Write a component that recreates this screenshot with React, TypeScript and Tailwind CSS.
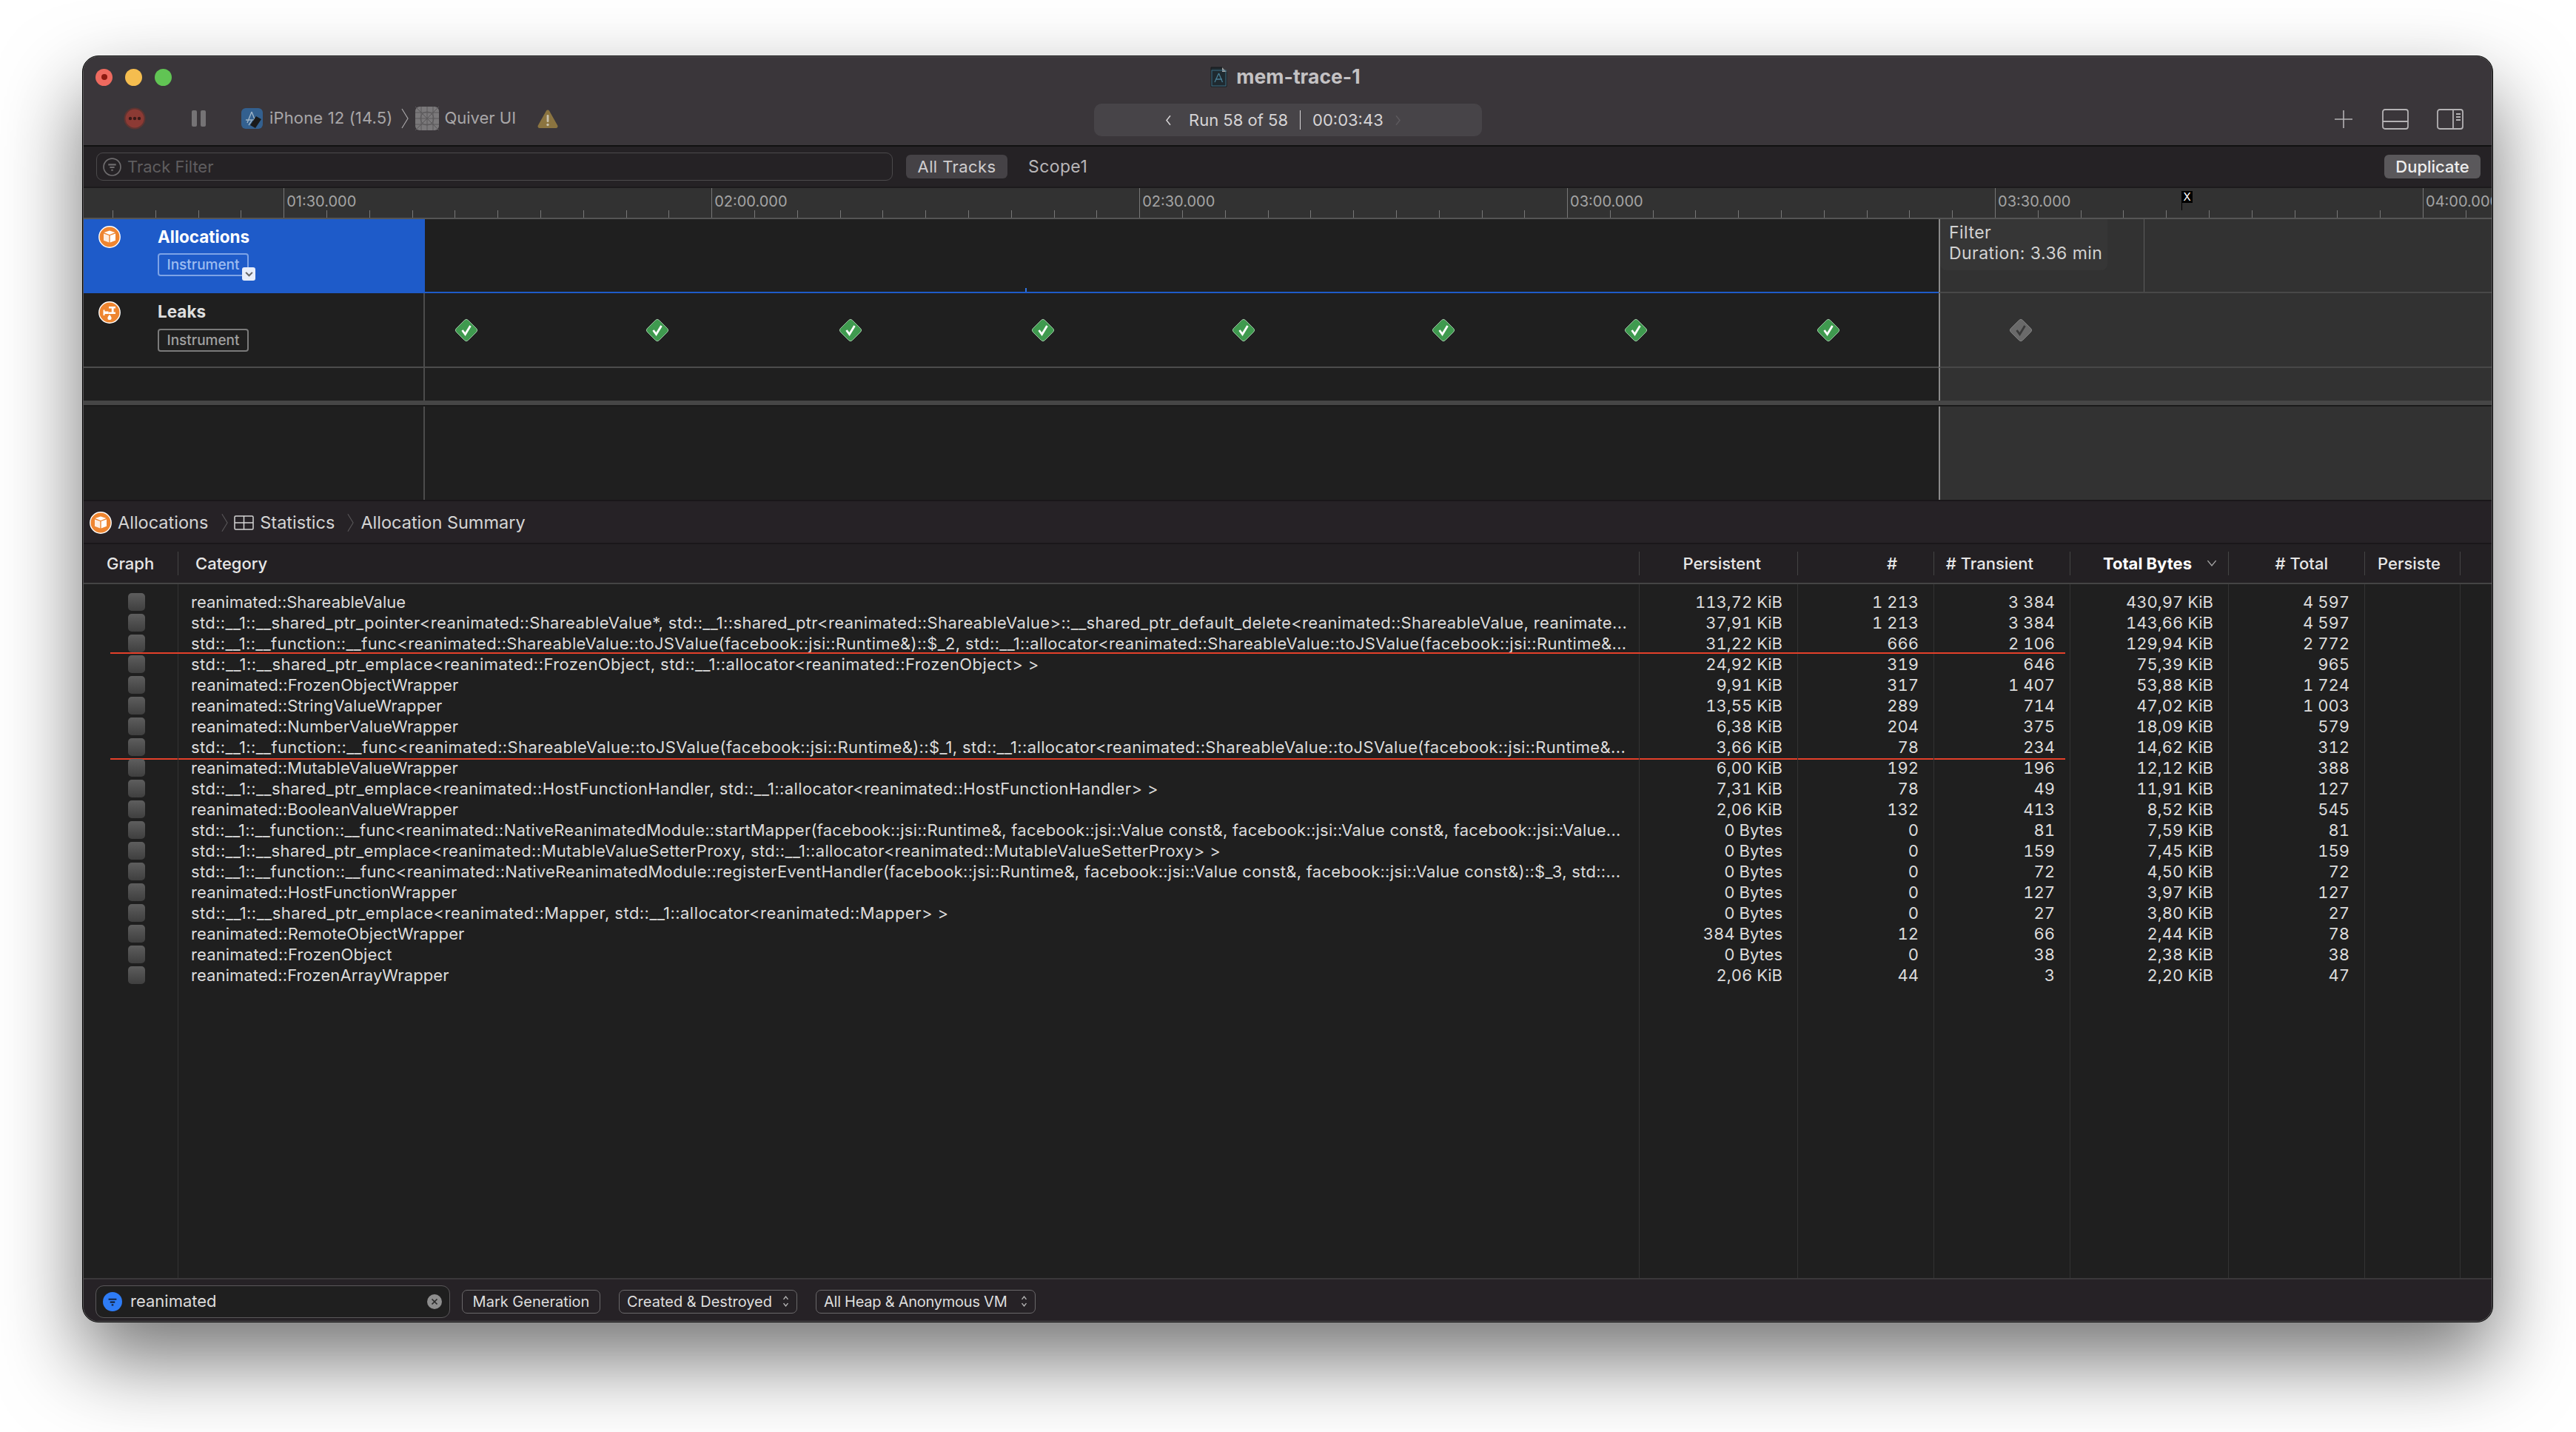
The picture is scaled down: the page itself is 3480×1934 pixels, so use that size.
import React from 'react';

const rows = [
  { name: 'reanimated::ShareableValue', track: 'tracking-[0px]', values: ['113,72 KiB', '1 213', '3 384', '430,97 KiB', '4 597'] },
  { name: 'std::__1::__shared_ptr_pointer<reanimated::ShareableValue*, std::__1::shared_ptr<reanimated::ShareableValue>::__shared_ptr_default_delete<reanimated::ShareableValue, reanimate...', track: 'tracking-[0.36px]', values: ['37,91 KiB', '1 213', '3 384', '143,66 KiB', '4 597'] },
  { name: 'std::__1::__function::__func<reanimated::ShareableValue::toJSValue(facebook::jsi::Runtime&)::$_2, std::__1::allocator<reanimated::ShareableValue::toJSValue(facebook::jsi::Runtime&...', track: 'tracking-[0.33px]', values: ['31,22 KiB', '666', '2 106', '129,94 KiB', '2 772'], line: 'top-[26px]' },
  { name: 'std::__1::__shared_ptr_emplace<reanimated::FrozenObject, std::__1::allocator<reanimated::FrozenObject> >', track: 'tracking-[0.44px]', values: ['24,92 KiB', '319', '646', '75,39 KiB', '965'] },
  { name: 'reanimated::FrozenObjectWrapper', track: 'tracking-[0.12px]', values: ['9,91 KiB', '317', '1 407', '53,88 KiB', '1 724'] },
  { name: 'reanimated::StringValueWrapper', track: 'tracking-[0.08px]', values: ['13,55 KiB', '289', '714', '47,02 KiB', '1 003'] },
  { name: 'reanimated::NumberValueWrapper', track: 'tracking-[0.08px]', values: ['6,38 KiB', '204', '375', '18,09 KiB', '579'] },
  { name: 'std::__1::__function::__func<reanimated::ShareableValue::toJSValue(facebook::jsi::Runtime&)::$_1, std::__1::allocator<reanimated::ShareableValue::toJSValue(facebook::jsi::Runtime&...', track: 'tracking-[0.36px]', values: ['3,66 KiB', '78', '234', '14,62 KiB', '312'], line: 'top-[29px]' },
  { name: 'reanimated::MutableValueWrapper', track: 'tracking-[0.08px]', values: ['6,00 KiB', '192', '196', '12,12 KiB', '388'] },
  { name: 'std::__1::__shared_ptr_emplace<reanimated::HostFunctionHandler, std::__1::allocator<reanimated::HostFunctionHandler> >', track: 'tracking-[0.4px]', values: ['7,31 KiB', '78', '49', '11,91 KiB', '127'] },
  { name: 'reanimated::BooleanValueWrapper', track: 'tracking-[0.08px]', values: ['2,06 KiB', '132', '413', '8,52 KiB', '545'] },
  { name: 'std::__1::__function::__func<reanimated::NativeReanimatedModule::startMapper(facebook::jsi::Runtime&, facebook::jsi::Value const&, facebook::jsi::Value const&, facebook::jsi::Value...', track: 'tracking-[0.24px]', values: ['0 Bytes', '0', '81', '7,59 KiB', '81'] },
  { name: 'std::__1::__shared_ptr_emplace<reanimated::MutableValueSetterProxy, std::__1::allocator<reanimated::MutableValueSetterProxy> >', track: 'tracking-[0.37px]', values: ['0 Bytes', '0', '159', '7,45 KiB', '159'] },
  { name: 'std::__1::__function::__func<reanimated::NativeReanimatedModule::registerEventHandler(facebook::jsi::Runtime&, facebook::jsi::Value const&, facebook::jsi::Value const&)::$_3, std::...', track: 'tracking-[0.28px]', values: ['0 Bytes', '0', '72', '4,50 KiB', '72'] },
  { name: 'reanimated::HostFunctionWrapper', track: 'tracking-[0.12px]', values: ['0 Bytes', '0', '127', '3,97 KiB', '127'] },
  { name: 'std::__1::__shared_ptr_emplace<reanimated::Mapper, std::__1::allocator<reanimated::Mapper> >', track: 'tracking-[0.46px]', values: ['0 Bytes', '0', '27', '3,80 KiB', '27'] },
  { name: 'reanimated::RemoteObjectWrapper', track: 'tracking-[0.12px]', values: ['384 Bytes', '12', '66', '2,44 KiB', '78'] },
  { name: 'reanimated::FrozenObject', track: 'tracking-[0.14px]', values: ['0 Bytes', '0', '38', '2,38 KiB', '38'] },
  { name: 'reanimated::FrozenArrayWrapper', track: 'tracking-[0.08px]', values: ['2,06 KiB', '44', '3', '2,20 KiB', '47'] },
];

const numberCols = ['w-[214px]', 'w-[184px]', 'w-[184px]', 'w-[214px]', 'w-[184px]'];

const leakMarks = [56, 314, 575, 835, 1106, 1376, 1636, 1896];

const rulerSegments = Array.from({ length: 56 }, (_, i) => i);
const rulerLabels: Record<number, string> = {
  4: '01:30.000',
  14: '02:00.000',
  24: '02:30.000',
  34: '03:00.000',
  44: '03:30.000',
  54: '04:00.000',
};

const AllocIcon = ({ className = '' }: { className?: string }) => (
  <svg viewBox="0 0 30 30" className={className}>
    <circle cx="15" cy="15" r="14.2" fill="#ee8530" stroke="#fff" strokeWidth="1.4" />
    <path d="M15 6.5l7.5 2.6-7.5 2.8-7.5-2.8z" fill="#fff" />
    <path d="M7 10.4l7.3 2.7v9.4L7 19.8z" fill="#fff" opacity="0.85" />
    <path d="M23 10.4l-7.3 2.7v9.4l7.3-2.7z" fill="#fff" />
  </svg>
);

const LeaksIcon = () => (
  <svg viewBox="0 0 30 30" className="h-[30px] w-[30px]">
    <circle cx="15" cy="15" r="14.2" fill="#ee8530" stroke="#fff" strokeWidth="1.4" />
    <path d="M14 7h9v2.6h-2.4v5H23V17h-9.6v-2.4h4.4v-5H14z" fill="#fff" />
    <path d="M6.5 11.5h2v2h5v3.6h-5v2h-2z" fill="#fff" />
    <path d="M15 18c1.6 2 2.6 3 2.6 4.4a2.6 2.6 0 0 1-5.2 0c0-1.4 1-2.4 2.6-4.4z" fill="#fff" />
  </svg>
);

const Diamond = ({ muted = false }: { muted?: boolean }) => (
  <svg viewBox="0 0 32 32" className="h-[32px] w-[32px]">
    <path
      d="M13.6 2.4a3.4 3.4 0 0 1 4.8 0l11.2 11.2a3.4 3.4 0 0 1 0 4.8L18.4 29.6a3.4 3.4 0 0 1-4.8 0L2.4 18.4a3.4 3.4 0 0 1 0-4.8z"
      fill={muted ? '#6a6a6a' : '#3f9a4f'}
      stroke={muted ? '#8a8a8a' : '#b9d8be'}
      strokeWidth="0.8"
    />
    <path d="M10.5 16l4 5.5L21.5 10" fill="none" stroke={muted ? '#3a3a3a' : '#fff'} strokeWidth="2.8" />
  </svg>
);

const Chevron = ({ className = '' }: { className?: string }) => (
  <svg viewBox="0 0 10 28" className={className} fill="none" stroke="currentColor" strokeWidth="1.2">
    <path d="M1 1l8 13-8 13" />
  </svg>
);

const UpDown = () => (
  <svg viewBox="0 0 10 20" className="h-[17px] w-[9px] shrink-0" fill="none" stroke="#b8b8b8" strokeWidth="1.6">
    <path d="M1.5 7L5 2.5 8.5 7M1.5 13L5 17.5 8.5 13" />
  </svg>
);

const FilterGlyph = ({ stroke }: { stroke: string }) => (
  <path d="M7 9h10M9 12.5h6M10.8 16h2.4" stroke={stroke} strokeWidth="2" fill="none" />
);

const TableRow = ({ name, values, line, track }: { name?: string; values?: string[]; line?: string; track?: string }) => (
  <div className="relative flex h-[28px] shrink-0 text-[22px] leading-[28px] text-[#dcdcdc]">
    <div className="flex w-[128px] shrink-0 items-center border-r border-[#333] pl-[60px]">
      {name && <div className="h-[24px] w-[23px] rounded-[5px] bg-gradient-to-b from-[#5e5e5e] to-[#3f3f3f]" />}
    </div>
    <div className={`${track} w-[1974px] shrink-0 overflow-hidden whitespace-nowrap border-r border-[#333] pl-[17px]`}>{name}</div>
    {numberCols.map((col, i) => (
      <div key={col + i} className={`${col} shrink-0 whitespace-nowrap border-r border-[#333] pr-[20px] text-right tabular-nums`}>
        {values && values[i]}
      </div>
    ))}
    <div className="w-[129px] shrink-0 border-r border-[#333]" />
    {line && <div className={`absolute left-[36px] ${line} h-[2px] w-[2641px] bg-[#e4402a]`} />}
  </div>
);

const HeaderCell = ({ className, children }: { className: string; children?: React.ReactNode }) => (
  <div className={`${className} flex h-[32px] shrink-0 items-center border-r border-[#444]`}>{children}</div>
);

const BarButton = ({ className, children }: { className: string; children: React.ReactNode }) => (
  <div className={`${className} flex h-[32px] items-center justify-between rounded-[7px] border border-[#6a686a] px-[10px] text-[20px] text-[#dedede]`}>
    {children}
  </div>
);

export default function App() {
  return (
    <div className="h-[1934px] w-[3480px] overflow-hidden bg-white pl-[111px] pt-[75px] [font-family:Inter,sans-serif]">
      <div className="h-[1711px] w-[3257px] rounded-[22px] border border-black bg-[#5a585a] p-px shadow-[0_50px_110px_rgba(0,0,0,0.55)]">
        <div className="flex h-full w-full flex-col overflow-hidden rounded-[20px] bg-[#1f1f1f]">
          {/* Title bar and toolbar */}
          <div className="flex h-[121px] shrink-0 flex-col border-b-2 border-[#111] bg-[#3a363a]">
            <div className="relative flex h-[52px] items-center justify-center pt-[2px]">
              <div className="absolute left-[16px] flex gap-[17px]">
                <div className="flex h-[23px] w-[23px] items-center justify-center rounded-full bg-[#ee6a5f]">
                  <div className="h-[8px] w-[8px] rounded-full bg-[#8c1a10]" />
                </div>
                <div className="h-[23px] w-[23px] rounded-full bg-[#f5bd4f]" />
                <div className="h-[23px] w-[23px] rounded-full bg-[#61c454]" />
              </div>
              <div className="flex items-center gap-[12px] pr-[6px]">
                <svg viewBox="0 0 23 28" className="h-[28px] w-[23px]">
                  <path d="M1 1h15l6 6v20H1z" fill="#1f2a30" stroke="#16181a" />
                  <path d="M16 1l6 6h-6z" fill="#a8a8a8" />
                  <path d="M11.5 9L6 21M11.5 9l5 12M7 17h9" stroke="#4a7f96" strokeWidth="1.3" fill="none" />
                  <rect x="2" y="5" width="19" height="21" fill="none" stroke="#3d6f85" strokeWidth="1" />
                </svg>
                <span className="text-[26.5px] font-bold text-[#c4c2c4]">mem-trace-1</span>
              </div>
            </div>
            <div className="flex flex-1 items-start pt-[11px]">
              <div className="flex w-[1365px] shrink-0 items-center pl-[54px] pt-[3px]">
                <svg viewBox="0 0 30 30" className="h-[30px] w-[30px] shrink-0">
                  <circle cx="15" cy="15" r="13.5" fill="#8c3a34" stroke="#5e3431" strokeWidth="2" />
                  <circle cx="9" cy="15" r="2.2" fill="#3a1a18" />
                  <circle cx="15" cy="15" r="2.2" fill="#3a1a18" />
                  <circle cx="21" cy="15" r="2.2" fill="#3a1a18" />
                </svg>
                <div className="ml-[62px] flex gap-[5px]">
                  <div className="h-[22px] w-[7px] rounded-[2px] bg-[#757375]" />
                  <div className="h-[22px] w-[7px] rounded-[2px] bg-[#757375]" />
                </div>
                <svg viewBox="0 0 29 28" className="ml-[48px] h-[28px] w-[29px] shrink-0">
                  <rect width="29" height="28" rx="6" fill="#33608f" />
                  <path d="M14 5L8 20M14 5l6 15M6 16h16M10 23l4-6" stroke="#9db4c8" strokeWidth="1.4" fill="none" />
                  <path d="M20 11l7 4-8 12-7-4z" fill="#1a1a1a" />
                </svg>
                <span className="ml-[9px] whitespace-nowrap text-[22px] tracking-[0.15px] text-[#a8a6a8]">iPhone 12 (14.5)</span>
                <Chevron className="ml-[12px] h-[28px] w-[10px] shrink-0 text-[#a8a6a8]" />
                <svg viewBox="0 0 32 32" className="ml-[9px] h-[32px] w-[32px] shrink-0">
                  <rect width="32" height="32" rx="6" fill="#7a787a" />
                  <path d="M8 0v32M16 0v32M24 0v32M0 8h32M0 16h32M0 24h32M0 0l32 32M32 0L0 32" stroke="#5a585a" strokeWidth="1" />
                  <circle cx="16" cy="16" r="9" fill="none" stroke="#5a585a" strokeWidth="1" />
                </svg>
                <span className="ml-[7px] whitespace-nowrap text-[22px] text-[#a8a6a8]">Quiver UI</span>
                <svg viewBox="0 0 28 26" className="ml-[29px] h-[26px] w-[28px] shrink-0">
                  <path d="M14 1.5a2.5 2.5 0 0 1 2.1 1.2l11 19.6a2.4 2.4 0 0 1-2.1 3.7H3a2.4 2.4 0 0 1-2.1-3.7l11-19.6A2.5 2.5 0 0 1 14 1.5z" fill="#8b7440" />
                  <rect x="12.6" y="8" width="2.8" height="10" rx="1.2" fill="#c9c2ae" />
                  <circle cx="14" cy="21.5" r="1.7" fill="#c9c2ae" />
                </svg>
              </div>
              <div className="flex h-[44px] w-[524px] shrink-0 items-center rounded-[10px] bg-[#474448] pl-[96px] text-[22px] text-[#d6d4d6]">
                <svg viewBox="0 0 10 18" className="h-[15px] w-[9px]" fill="none" stroke="#d6d4d6" strokeWidth="1.8">
                  <path d="M8 1.5L2 9l6 7.5" />
                </svg>
                <span className="ml-[23px] whitespace-nowrap">Run 58 of 58</span>
                <div className="mx-[16px] h-[26px] w-px bg-[#d6d4d6]" />
                <span className="whitespace-nowrap">00:03:43</span>
                <svg viewBox="0 0 10 18" className="ml-[15px] h-[15px] w-[9px]" fill="none" stroke="#5c595d" strokeWidth="1.8">
                  <path d="M2 1.5L8 9l-6 7.5" />
                </svg>
              </div>
              <div className="flex flex-1 items-center justify-end gap-[38px] pr-[38px] pt-[7px]">
                <svg viewBox="0 0 24 24" className="h-[24px] w-[24px]" stroke="#b4b2b4" strokeWidth="1.6">
                  <path d="M12 0v24M0 12h24" />
                </svg>
                <svg viewBox="0 0 36 28" className="ml-[2px] h-[28px] w-[36px]" fill="none" stroke="#b4b2b4" strokeWidth="1.8">
                  <rect x="1" y="1" width="34" height="26" rx="3" />
                  <path d="M1 17h34" />
                </svg>
                <svg viewBox="0 0 36 28" className="h-[28px] w-[36px]" fill="none" stroke="#b4b2b4" strokeWidth="1.8">
                  <rect x="1" y="1" width="34" height="26" rx="3" />
                  <path d="M22 1v26M26 7h6M26 11h6M26 15h6" />
                </svg>
              </div>
            </div>
          </div>

          {/* Track filter bar */}
          <div className="flex h-[56px] shrink-0 items-center border-b-2 border-[#1c1a1c] bg-[#252225] pl-[17px] pr-[15px]">
            <div className="flex h-[38px] w-[1076px] items-center rounded-[9px] border border-[#4c4a4c] pl-[8px]">
              <svg viewBox="0 0 24 24" className="h-[25px] w-[25px]">
                <circle cx="12" cy="12" r="11" fill="none" stroke="#6e6c6e" strokeWidth="1.6" />
                <FilterGlyph stroke="#6e6c6e" />
              </svg>
              <span className="ml-[8px] text-[22px] text-[#5f5d5f]">Track Filter</span>
            </div>
            <div className="ml-[18px] flex h-[32px] w-[137px] items-center justify-center rounded-[6px] bg-[#454246] text-[22px] tracking-[0.4px] text-[#cfcdcf]">All Tracks</div>
            <span className="ml-[28px] text-[23px] tracking-[0.4px] text-[#b8b6b8]">Scope1</span>
            <div className="ml-auto flex h-[32px] w-[130px] items-center justify-center rounded-[6px] bg-[#5a585b] text-[22px] font-medium text-[#eeeeee]">Duplicate</div>
          </div>

          {/* Time ruler */}
          <div className="relative flex h-[42px] shrink-0 overflow-hidden border-b-2 border-[#555] bg-[#323232] pl-[39px]">
            {rulerSegments.map((i) => (
              <div key={i} className="flex h-full w-[57.8px] shrink-0 items-end">
                {rulerLabels[i] ? (
                  <div className="h-full whitespace-nowrap border-l border-[#777] pl-[3px] pt-[7px] text-[20px] leading-[22px] text-[#a4a4a4]">{rulerLabels[i]}</div>
                ) : (
                  <div className="h-[10px] border-l border-[#777]" />
                )}
              </div>
            ))}
            <div className="absolute left-[2834px] top-[4px] flex flex-col">
              <div className="flex h-[16px] w-[15px] items-center justify-center bg-black text-[15px] leading-[16px] text-white">X</div>
              <div className="h-[10px] w-px bg-black" />
            </div>
          </div>

          {/* Tracks */}
          <div className="flex h-[245px] shrink-0 flex-col">
            <div className="flex h-[100px] shrink-0">
              <div className="relative w-[461px] shrink-0 bg-[#1e5bc9]">
                <AllocIcon className="absolute left-[20px] top-[9px] h-[30px] w-[30px]" />
                <div className="pl-[100px] pt-[10px] text-[22.5px] font-bold leading-[28px] text-white">Allocations</div>
                <div className="relative ml-[100px] mt-[8px] flex h-[31px] w-[123px] items-center justify-center rounded-[4px] border-2 border-[#7da3e6] pt-[1px] text-[19px] font-medium text-[#9dbcf0]">
                  Instrument
                  <div className="absolute left-[112px] top-[17px] flex h-[18px] w-[18px] items-center justify-center rounded-[3px] bg-[#e8eefa]">
                    <svg viewBox="0 0 12 8" className="h-[7px] w-[11px]" fill="none" stroke="#666" strokeWidth="2.4">
                      <path d="M1 1l5 5 5-5" />
                    </svg>
                  </div>
                </div>
              </div>
              <div className="relative w-[2045px] shrink-0 border-b-2 border-[#1e5bc9] bg-[#1f1f1f]">
                <div className="absolute bottom-0 left-[811px] h-[5px] w-[2px] bg-[#2f74e0]" />
              </div>
              <div className="relative flex flex-1 border-b-2 border-l-2 border-b-[#484848] border-l-[#8a8a8a] bg-[#323232]">
                <div className="w-[276px] border-r border-[#5c5c5c]" />
                <div className="absolute left-0 top-0 h-[69px] w-[226px] rounded-b-[8px] bg-[#363636] pl-[12px] pt-[4px] text-[23px] leading-[28px] tracking-[0.45px] text-[#d2d2d2]">
                  <div>Filter</div>
                  <div className="whitespace-nowrap">Duration: 3.36 min</div>
                </div>
              </div>
            </div>
            <div className="flex h-[101px] shrink-0">
              <div className="relative w-[461px] shrink-0 border-b-2 border-r-2 border-[#4c4c4c]">
                <div className="absolute left-[20px] top-[11px]">
                  <LeaksIcon />
                </div>
                <div className="pl-[100px] pt-[11px] text-[22.5px] font-bold leading-[28px] text-[#dedede]">Leaks</div>
                <div className="ml-[100px] mt-[9px] flex h-[31px] w-[123px] items-center justify-center rounded-[4px] border-2 border-[#7a7a7a] pt-[1px] text-[19px] font-medium text-[#a0a0a0]">Instrument</div>
              </div>
              <div className="relative w-[2045px] shrink-0 border-b-2 border-[#4c4c4c]">
                {leakMarks.map((x) => (
                  <div key={x} className="absolute top-[34px]" style={{ left: x - 16 }}>
                    <Diamond />
                  </div>
                ))}
              </div>
              <div className="relative flex-1 border-b-2 border-l-2 border-b-[#484848] border-l-[#8a8a8a] bg-[#323232]">
                <div className="absolute left-[93px] top-[34px]">
                  <Diamond muted />
                </div>
              </div>
            </div>
            <div className="flex flex-1">
              <div className="w-[461px] shrink-0 border-r-2 border-[#4c4c4c]" />
              <div className="w-[2045px] shrink-0" />
              <div className="flex-1 border-l-2 border-[#8a8a8a] bg-[#323232]" />
            </div>
          </div>

          {/* Divider */}
          <div className="h-[8px] shrink-0 border-b-2 border-[#1a1a1a] bg-[#464646]" />

          {/* Empty lane */}
          <div className="flex h-[126px] shrink-0">
            <div className="w-[461px] shrink-0 border-r-2 border-[#4c4c4c]" />
            <div className="w-[2045px] shrink-0" />
            <div className="flex-1 border-l-2 border-[#8a8a8a] bg-[#323232]" />
          </div>

          {/* Breadcrumb */}
          <div className="flex h-[60px] shrink-0 items-center border-y-2 border-[#1a171a] bg-[#262226] pl-[8px] pt-[1px] text-[23.5px] text-[#d4d4d4]">
            <AllocIcon className="h-[30px] w-[30px] shrink-0" />
            <span className="ml-[8px]">Allocations</span>
            <Chevron className="ml-[18px] h-[28px] w-[9px] shrink-0 text-[#5a585a]" />
            <svg viewBox="0 0 27 20" className="ml-[8px] h-[20px] w-[27px] shrink-0" fill="none" stroke="#d4d4d4" strokeWidth="1.5">
              <rect x="1" y="1" width="25" height="18" rx="1.5" />
              <path d="M13.5 1v18M1 10h25" />
            </svg>
            <span className="ml-[8px]">Statistics</span>
            <Chevron className="ml-[17px] h-[28px] w-[9px] shrink-0 text-[#5a585a]" />
            <span className="ml-[9px]">Allocation Summary</span>
          </div>

          {/* Table */}
          <div className="flex h-[54px] shrink-0 items-center border-b-2 border-[#444] bg-[#232023] text-[22px] font-medium text-[#e6e6e6]">
            <HeaderCell className="w-[128px] pl-[31px]">Graph</HeaderCell>
            <HeaderCell className="w-[1974px] pl-[23px]">Category</HeaderCell>
            <HeaderCell className="w-[214px] justify-end pr-[49px]">Persistent</HeaderCell>
            <HeaderCell className="w-[184px] justify-end pr-[49px]">#</HeaderCell>
            <HeaderCell className="w-[184px] justify-end whitespace-nowrap pr-[49px]"># Transient</HeaderCell>
            <HeaderCell className="relative w-[214px] justify-end whitespace-nowrap pr-[49px] font-bold text-white">
              Total Bytes
              <svg viewBox="0 0 12 8" className="absolute right-[15px] top-[11px] h-[9px] w-[14px]" fill="none" stroke="#a8a8a8" strokeWidth="1.2">
                <path d="M1 1l5 6 5-6" />
              </svg>
            </HeaderCell>
            <HeaderCell className="w-[184px] justify-end whitespace-nowrap pr-[49px]"># Total</HeaderCell>
            <HeaderCell className="w-[129px] pl-[17px]">Persiste</HeaderCell>
          </div>
          <div className="flex min-h-0 flex-1 flex-col bg-[#1f1f1f]">
            <div className="flex h-[10px] shrink-0 overflow-hidden">
              <TableRow />
            </div>
            {rows.map((row) => (
              <TableRow key={row.name} name={row.name} values={row.values} line={row.line} track={row.track} />
            ))}
            <div className="flex min-h-0 flex-1 overflow-hidden">
              <div className="w-[128px] shrink-0 border-r border-[#333]" />
              <div className="w-[1974px] shrink-0 border-r border-[#333]" />
              <div className="w-[214px] shrink-0 border-r border-[#333]" />
              <div className="w-[184px] shrink-0 border-r border-[#333]" />
              <div className="w-[184px] shrink-0 border-r border-[#333]" />
              <div className="w-[214px] shrink-0 border-r border-[#333]" />
              <div className="w-[184px] shrink-0 border-r border-[#333]" />
              <div className="w-[129px] shrink-0 border-r border-[#333]" />
            </div>
          </div>

          {/* Bottom bar */}
          <div className="flex h-[58px] shrink-0 items-center border-t-2 border-[#3a383a] bg-[#262226] pl-[16px] pt-[3px]">
            <div className="flex h-[44px] w-[479px] items-center rounded-[11px] border border-[#5a585a] bg-[#1f1f1f] pl-[9px] pr-[10px]">
              <svg viewBox="0 0 24 24" className="h-[26px] w-[26px] shrink-0">
                <circle cx="12" cy="12" r="12" fill="#2e7cf6" />
                <FilterGlyph stroke="#14233f" />
              </svg>
              <span className="ml-[11px] text-[22px] text-[#dcdcdc]">reanimated</span>
              <svg viewBox="0 0 20 20" className="ml-auto h-[20px] w-[20px] shrink-0">
                <circle cx="10" cy="10" r="10" fill="#8e8e8e" />
                <path d="M6.5 6.5l7 7M13.5 6.5l-7 7" stroke="#2a2a2a" strokeWidth="1.7" />
              </svg>
            </div>
            <BarButton className="ml-[16px] w-[187px] justify-center">Mark Generation</BarButton>
            <BarButton className="ml-[25px] w-[241px] gap-[6px] whitespace-nowrap">
              Created &amp; Destroyed
              <UpDown />
            </BarButton>
            <BarButton className="ml-[25px] w-[297px] gap-[6px] whitespace-nowrap">
              <span className="tracking-[-0.25px]">All Heap &amp; Anonymous VM</span>
              <UpDown />
            </BarButton>
          </div>
        </div>
      </div>
    </div>
  );
}
